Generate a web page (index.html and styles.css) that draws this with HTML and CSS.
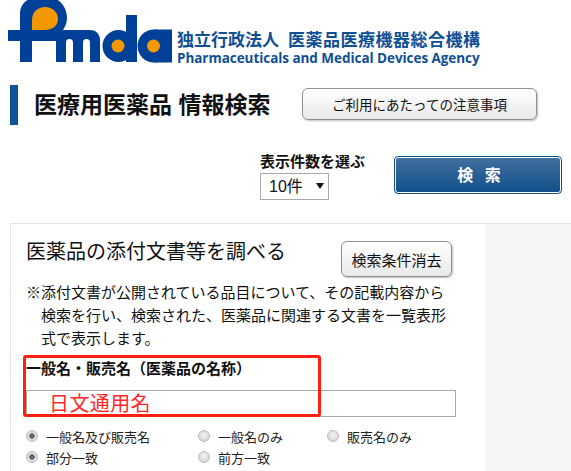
FILE: index.html
```html
<!DOCTYPE html>
<html lang="ja">
<head>
    <meta charset="UTF-8">
    <meta name="viewport" content="width=device-width, initial-scale=1.0">
    <title>医療用医薬品 情報検索</title>
    <link rel="stylesheet" href="styles.css">
</head>
<body>
    <header class="site-header">
        <svg class="logo" width="172" height="63" viewBox="0 0 172 63" aria-label="Pmda">
            <g fill="#004098">
                <path d="M8 30H20V14C20 2 30 -4 44 -4C58 -4 67 6 67 18C67 23 65 27 63 30H90C96 30 100 34 100 40V62H90V43C90 40 89 39 86.500 39C84 39 83 40 83 43V62H73V43C73 40 72 39 69.500 39C67 39 66 40 66 43V62H56V41H32V62H20V41H8Z"/>
                <circle cx="118.500" cy="46" r="16"/>
                <rect x="126" y="15" width="11" height="47"/>
                <circle cx="154" cy="46" r="16.500"/>
                <path d="M154 29.500H172V62.500H154Z"/>
            </g>
            <g fill="#f39800">
                <path d="M32 30V20C32 12 38 7 45 7C53 7 58 13 58 19C58 26 52 30 45 30Z"/>
                <circle cx="118" cy="46" r="6.500"/>
                <circle cx="153.500" cy="46" r="6.500"/>
            </g>
        </svg>
        <div class="agency">
            <div class="agency-ja"><span class="agency-type">独立行政法人</span><span class="agency-name">医薬品医療機器総合機構</span></div>
            <div class="agency-en">Pharmaceuticals and Medical Devices Agency</div>
        </div>
    </header>

    <div class="title-row">
        <h1>医療用医薬品 情報検索</h1>
        <button class="btn btn-notice" type="button">ご利用にあたっての注意事項</button>
    </div>

    <div class="search-row">
        <div class="count-group">
            <label class="count-label" for="count">表示件数を選ぶ</label>
            <div class="select-wrap">
                <select id="count" class="count-select">
                    <option>10件</option>
                    <option>20件</option>
                    <option>50件</option>
                </select>
            </div>
        </div>
        <button class="btn-search" type="button">検 索</button>
    </div>

    <section class="panel">
        <div class="panel-main">
            <div class="panel-head">
                <h2>医薬品の添付文書等を調べる</h2>
                <button class="btn btn-clear" type="button">検索条件消去</button>
            </div>
            <p class="note">※添付文書が公開されている品目について、その記載内容から検索を行い、検索された、医薬品に関連する文書を一覧表形式で表示します。</p>

            <div class="field">
                <label class="field-label" for="drug-name">一般名・販売名&#xFF08;医薬品の名称&#xFF09;</label>
                <input id="drug-name" class="field-input" type="text">
                <div class="annotation"><span class="annotation-text">日文通用名</span></div>
            </div>

            <div class="radio-grid">
                <label class="radio"><input type="radio" name="kind" checked>一般名及び販売名</label>
                <label class="radio"><input type="radio" name="kind">一般名のみ</label>
                <label class="radio"><input type="radio" name="kind">販売名のみ</label>
                <label class="radio"><input type="radio" name="match" checked>部分一致</label>
                <label class="radio"><input type="radio" name="match">前方一致</label>
            </div>
        </div>
        <div class="panel-side"></div>
    </section>
</body>
</html>
```

FILE: styles.css
```css
html, body {
    height: 100%;
}

body {
    margin: 0;
    overflow: hidden;
    background-color: #fff;
    color: #111;
    font-family: "Liberation Sans", "Noto Sans CJK JP", sans-serif;
}

button, select, input {
    font-family: inherit;
}

.site-header {
    display: flex;
    align-items: flex-start;
    height: 67px;
}

.logo {
    display: block;
    flex-shrink: 0;
}

.agency {
    margin: 27px 0 0 5px;
    color: #0f4f96;
    font-weight: bold;
    white-space: nowrap;
}

.agency-ja {
    display: flex;
    align-items: center;
    gap: 9px;
    height: 22px;
    font-size: 17px;
}

.agency-name {
    letter-spacing: 0.5px;
}

.agency-en {
    font-family: "Open Sans", sans-serif;
    font-size: 13.500px;
    line-height: 18px;
    letter-spacing: -0.05px;
}

.title-row {
    display: flex;
    align-items: center;
    height: 40px;
    margin: 18px 0 0 10px;
    border-left: 8px solid #0f5596;
}

h1 {
    flex-shrink: 0;
    width: 268px;
    margin: 0 0 0 16px;
    font-size: 23px;
    line-height: 28px;
    font-weight: bold;
    white-space: nowrap;
}

.btn {
    border: 1px solid #8f8f8f;
    border-radius: 6px;
    background: linear-gradient(#fff, #e9e9e9);
    box-shadow: 1px 1px 2px rgba(0, 0, 0, 0.25);
    color: #111;
    padding: 0;
}

.btn-notice {
    flex-shrink: 0;
    width: 235px;
    height: 32px;
    margin-top: -2px;
    font-size: 13.500px;
}

.search-row {
    display: flex;
    align-items: flex-start;
    margin: 27px 0 0 260px;
}

.count-group {
    display: flex;
    flex-direction: column;
    align-items: flex-start;
    width: 134px;
}

.count-label {
    font-size: 15px;
    line-height: 20px;
    font-weight: bold;
}

.select-wrap {
    position: relative;
    margin-top: 1px;
}

/* select arrow */
.select-wrap::after {
    content: "";
    position: absolute;
    left: 56px;
    top: 10px;
    border-top: 6px solid #111;
    border-left: 4px solid transparent;
    border-right: 4px solid transparent;
}

.count-select {
    appearance: none;
    display: block;
    width: 69px;
    height: 27px;
    padding-left: 8px;
    border: 1px solid #aaa;
    border-radius: 0;
    background-color: #fff;
    color: #111;
    font-size: 16px;
}

.btn-search {
    width: 168px;
    height: 38px;
    margin-top: 4px;
    padding: 0 0 2px 4px;
    border: 1px solid #0f4f8c;
    border-radius: 4px;
    outline: 1px solid #fff;
    outline-offset: -2px;
    background: linear-gradient(#43709f, #0f4f8c);
    color: #fff;
    font-size: 16px;
    font-weight: bold;
    letter-spacing: 2px;
    word-spacing: 3px;
}

.panel {
    display: flex;
    height: 248px;
    margin: 23px 0 0 10px;
    border-top: 1px solid #e4e4e4;
    border-left: 1px solid #e4e4e4;
}

.panel-main {
    width: 474px;
    padding: 17px 0 0 15px;
    box-sizing: border-box;
}

.panel-side {
    flex: 1;
    background-color: #f5f5f5;
}

.panel-head {
    display: flex;
    align-items: flex-start;
    height: 36px;
}

h2 {
    width: 315px;
    margin: 0;
    font-size: 20px;
    line-height: 22px;
    font-weight: normal;
    white-space: nowrap;
}

.btn-clear {
    width: 111px;
    height: 36px;
    font-size: 15px;
}

.note {
    width: 405px;
    margin: 4px 0 0;
    padding-left: 15px;
    text-indent: -15px;
    font-size: 15px;
    line-height: 23px;
}

.field {
    position: relative;
    width: 430px;
    margin-top: 8px;
}

.field-label {
    display: block;
    font-size: 15px;
    line-height: 22px;
    font-weight: bold;
    white-space: nowrap;
}

.field-input {
    display: block;
    box-sizing: border-box;
    width: 430px;
    height: 27px;
    margin-top: 10px;
    border: 1px solid #aaa;
    background-color: #fff;
}

.annotation {
    position: absolute;
    left: -3px;
    top: -3px;
    width: 298px;
    height: 62px;
    box-sizing: border-box;
    border: 3px solid #ff2010;
    border-radius: 3px;
}

.annotation-text {
    position: absolute;
    left: 23px;
    top: 32px;
    color: #ff2a2a;
    font-size: 20px;
    line-height: 28px;
    letter-spacing: 0.4px;
    white-space: nowrap;
}

.radio-grid {
    display: grid;
    grid-template-columns: 172px 129px 1fr;
    row-gap: 1px;
    margin-top: 9px;
}

.radio {
    display: flex;
    align-items: center;
    gap: 8px;
    height: 20px;
    font-size: 13px;
    color: #222;
    white-space: nowrap;
}

.radio input {
    appearance: none;
    display: block;
    width: 12px;
    height: 12px;
    margin: 0;
    border: 1px solid #bbb;
    border-radius: 50%;
    background: radial-gradient(circle at 50% 40%, #f2f2f2, #cfcfcf);
}

.radio input:checked {
    background: radial-gradient(circle, #666 0, #666 2.500px, #e2e2e2 3px, #d4d4d4 100%);
}
```
